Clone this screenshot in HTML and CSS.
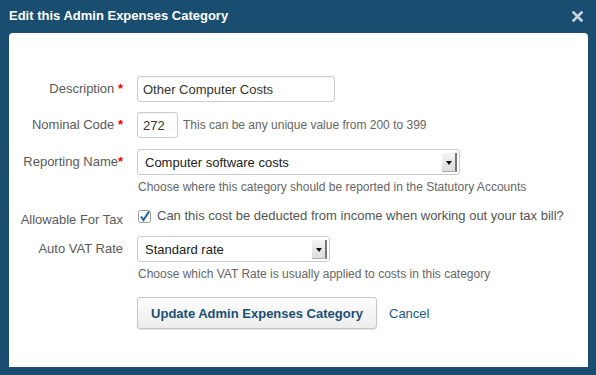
FILE: index.html
```html
<!DOCTYPE html>
<html lang="en">
<head>
    <meta charset="UTF-8">
    <title>Edit this Admin Expenses Category</title>
    <link rel="stylesheet" href="styles.css">
</head>
<body>
    <div class="dialog">
        <div class="dialog-head">
            <h1>Edit this Admin Expenses Category</h1>
            <span class="close">
                <svg width="11" height="11" viewBox="0 0 11 11"><path d="M1.5 1.5 L9.5 9.5 M9.5 1.5 L1.5 9.5" stroke="#c9d6e0" stroke-width="2.6" stroke-linecap="square"/></svg>
            </span>
        </div>
        <form class="panel">
            <div class="row row-desc">
                <label class="label">Description <span class="req">*</span></label>
                <div class="field"><input class="text wide" type="text" value="Other Computer Costs"></div>
            </div>
            <div class="row row-code">
                <label class="label">Nominal Code <span class="req">*</span></label>
                <div class="field inline">
                    <input class="text short" type="text" value="272">
                    <span class="hint">This can be any unique value from 200 to 399</span>
                </div>
            </div>
            <div class="row row-report">
                <label class="label">Reporting Name<span class="req">*</span></label>
                <div class="field">
                    <div class="select long"><span>Computer software costs</span><i class="arrow"></i></div>
                    <p class="hint">Choose where this category should be reported in the Statutory Accounts</p>
                </div>
            </div>
            <div class="row row-tax">
                <label class="label">Allowable For Tax</label>
                <div class="field inline">
                    <span class="check">
                        <svg width="13" height="13" viewBox="0 0 13 13"><rect x="0.5" y="0.5" width="12" height="12" rx="2" fill="#fff" stroke="#9a9a9a"/><path d="M3 6.5 L5.5 10 L11 1.5" fill="none" stroke="#1f5f9c" stroke-width="2"/></svg>
                    </span>
                    <span class="check-text">Can this cost be deducted from income when working out your tax bill?</span>
                </div>
            </div>
            <div class="row row-vat">
                <label class="label">Auto VAT Rate</label>
                <div class="field">
                    <div class="select mid"><span>Standard rate</span><i class="arrow"></i></div>
                    <p class="hint">Choose which VAT Rate is usually applied to costs in this category</p>
                </div>
            </div>
            <div class="row row-actions">
                <div class="label"></div>
                <div class="field inline">
                    <button type="button" class="btn">Update Admin Expenses Category</button>
                    <a href="#" class="cancel">Cancel</a>
                </div>
            </div>
        </form>
    </div>
</body>
</html>
```
FILE: styles.css
```css
*{
    margin: 0;
    padding: 0;
    box-sizing: border-box;
}
body{
    background-color: #1a4e71;
    font-family: "Liberation Sans", Arial, sans-serif;
    font-size: 13px;
    color: #555;
    width: 596px;
    height: 375px;
    overflow: hidden;
}
.dialog-head{
    height: 33px;
    display: flex;
    align-items: center;
    justify-content: space-between;
    padding: 0 13px 2px 9px;
}
.dialog-head h1{
    color: #fff;
    font-size: 13px;
    font-weight: bold;
}
.close{
    display: flex;
    margin-top: 2px;
}
.panel{
    display: block;
    margin: 0 8px 0 9px;
    height: 334px;
    background-color: #fff;
    border-radius: 4px 4px 0 0;
    padding-top: 43px;
}
.row{
    display: flex;
    align-items: flex-start;
}
.label{
    width: 128px;
    flex-shrink: 0;
    text-align: right;
    padding-right: 14px;
    line-height: 26px;
    color: #5a5a5a;
}
.req{
    color: #e00;
    font-weight: bold;
}
.field.inline{
    display: flex;
    align-items: center;
}
.text{
    height: 26px;
    border: 1px solid #ccc;
    border-radius: 3px;
    padding: 0 5px;
    font-family: inherit;
    font-size: 13px;
    color: #333;
    box-shadow: inset 0 1px 1px rgba(0,0,0,0.05);
}
.wide{
    width: 198px;
}
.short{
    width: 41px;
}
.hint{
    color: #666;
    font-size: 12px;
}
.field.inline .hint{
    margin-left: 5px;
}
p.hint{
    margin-top: 3px;
    margin-left: 1px;
    line-height: 18px;
}
.select{
    height: 26px;
    border: 1px solid #ccc;
    border-radius: 3px;
    display: flex;
    align-items: center;
    justify-content: space-between;
    padding: 0 2px 0 7px;
    color: #222;
}
.long{
    width: 323px;
}
.mid{
    width: 193px;
}
.arrow{
    width: 15px;
    height: 19px;
    background: linear-gradient(#f4f4f4, #dcdcdc);
    border-right: 2px solid #777;
    border-bottom: 1px solid #aaa;
    position: relative;
}
.arrow::after{
    content: "";
    position: absolute;
    left: 4px;
    top: 8px;
    border-left: 3px solid transparent;
    border-right: 3px solid transparent;
    border-top: 4px solid #111;
}
.row-desc{
    margin-bottom: 10px;
}
.row-code{
    margin-bottom: 11px;
}
.row-tax{
    margin-top: 12px;
    height: 26px;
}
.row-tax .label{
    line-height: 24px;
}
.check{
    display: flex;
    margin: 0 6px 0 1px;
    padding-top: 1px;
}
.check-text{
    color: #555;
}
.row-vat{
    margin-top: 2px;
}
.row-actions{
    margin-top: 14px;
}
.btn{
    width: 240px;
    height: 32px;
    border: 1px solid #c6c6c6;
    border-radius: 3px;
    background: linear-gradient(#fdfdfd, #ececec);
    box-shadow: 0 1px 1px rgba(0,0,0,0.12);
    color: #1d4f74;
    font-family: inherit;
    font-size: 13px;
    font-weight: bold;
}
.cancel{
    margin-left: 12px;
    color: #1d5a86;
    text-decoration: none;
}
```
